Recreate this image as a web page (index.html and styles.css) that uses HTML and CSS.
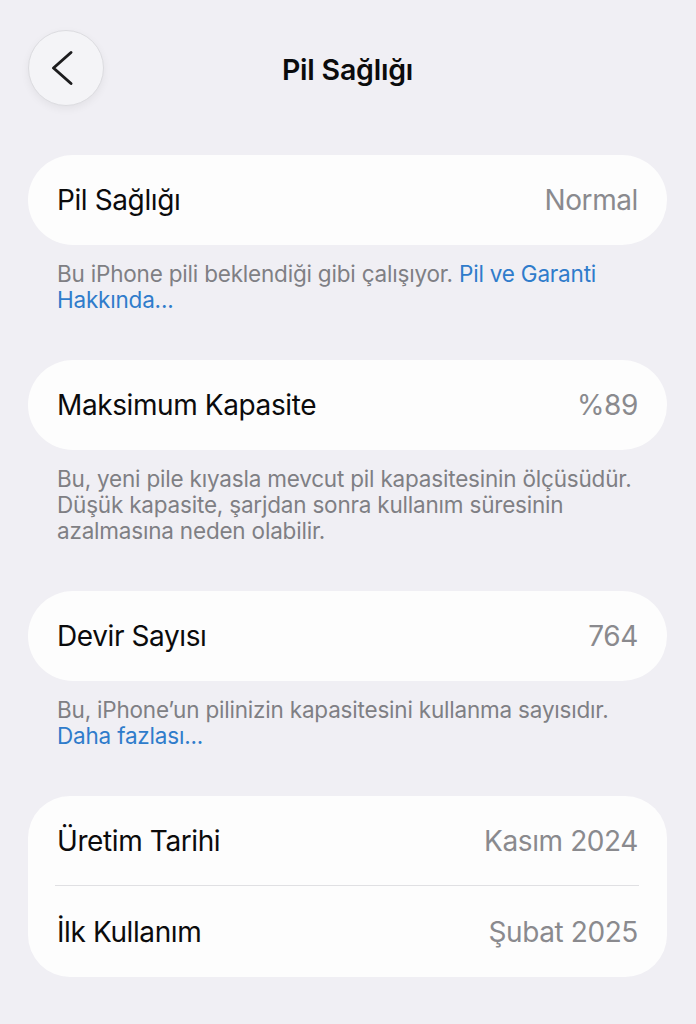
FILE: index.html
```html
<!DOCTYPE html>
<html lang="tr">
<head>
<meta charset="utf-8">
<title>Pil Sağlığı</title>
<link rel="stylesheet" href="styles.css">
</head>
<body>
<div class="page">
  <header class="nav">
    <button class="back" aria-label="Geri">
      <svg width="24" height="36" viewBox="0 0 24 36"><path d="M21 2.5 L3.5 18 L21 33.5" fill="none" stroke="#1c1c1e" stroke-width="3" stroke-linecap="round" stroke-linejoin="round"/></svg>
    </button>
    <h1 class="title">Pil Sağlığı</h1>
    <div class="spacer"></div>
  </header>

  <section class="group">
    <div class="card">
      <div class="row"><span class="label">Pil Sağlığı</span><span class="value">Normal</span></div>
    </div>
    <p class="note">Bu iPhone pili beklendiği gibi çalışıyor. <a class="link">Pil ve Garanti Hakkında...</a></p>
  </section>

  <section class="group">
    <div class="card">
      <div class="row"><span class="label">Maksimum Kapasite</span><span class="value">%89</span></div>
    </div>
    <p class="note">Bu, yeni pile kıyasla mevcut pil kapasitesinin ölçüsüdür. Düşük kapasite, şarjdan sonra kullanım süresinin azalmasına neden olabilir.</p>
  </section>

  <section class="group">
    <div class="card">
      <div class="row"><span class="label">Devir Sayısı</span><span class="value">764</span></div>
    </div>
    <p class="note">Bu, iPhone’un pilinizin kapasitesini kullanma sayısıdır. <a class="link">Daha fazlası...</a></p>
  </section>

  <section class="group">
    <div class="card card-multi">
      <div class="row row-top"><span class="label">Üretim Tarihi</span><span class="value">Kasım 2024</span></div>
      <div class="sep"></div>
      <div class="row row-bottom"><span class="label">İlk Kullanım</span><span class="value">Şubat 2025</span></div>
    </div>
  </section>
</div>
</body>
</html>
```

FILE: styles.css
```css
* { box-sizing: border-box; }
html, body { margin: 0; padding: 0; }
body {
  background: #f0eff4;
  font-family: Inter, "Noto Sans", "Liberation Sans", sans-serif;
  color: #0b0b0c;
  width: 696px;
  min-height: 1024px;
}
.page { padding: 30px 29px 0 28px; }
.nav {
  display: flex;
  align-items: center;
  height: 76px;
  margin-bottom: 49px;
}
.back {
  width: 76px;
  height: 76px;
  border-radius: 50%;
  border: 1px solid #dcdce0;
  background: #f4f4f7;
  box-shadow: 0 3px 8px rgba(0,0,0,0.06);
  display: flex;
  align-items: center;
  justify-content: center;
  padding: 0 8px 0 0;
  flex: none;
}
.title {
  flex: 1;
  text-align: center;
  margin: 0;
  font-size: 28.5px;
  font-weight: 600;
  letter-spacing: -0.2px;
  padding-top: 2px;
}
.spacer { width: 76px; flex: none; }
.group { margin-bottom: 47px; }
.card {
  background: #fdfdfd;
  border-radius: 45px;
  padding: 0 29px;
}
.card-multi { border-radius: 42px; }
.row {
  height: 90px;
  display: flex;
  align-items: center;
  justify-content: space-between;
  font-size: 28px;
  letter-spacing: -0.4px;
}
.row-top { height: 89px; }
.row-bottom { height: 91px; }
.label { color: #0b0b0c; }
.value { color: #8a8a8e; }
.sep {
  height: 1px;
  background: #e0e0e3;
  margin: 0 -1px 0 -2px;
}
.note {
  margin: 16px 0 0 29px;
  padding-right: 22px;
  font-size: 22.5px;
  line-height: 26px;
  color: #7f7f84;
  letter-spacing: -0.2px;
}
.link { color: #2f7ccb; text-decoration: none; }
```
